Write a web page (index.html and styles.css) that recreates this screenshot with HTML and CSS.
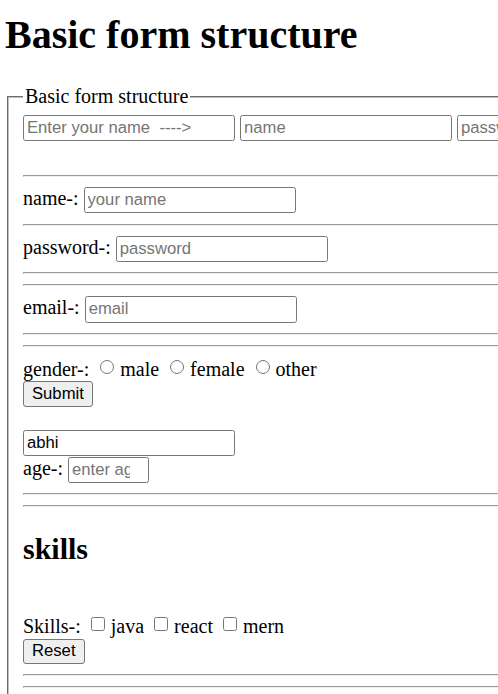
FILE: index.html
```html
<!DOCTYPE html>
<html lang="en">
<head>
<meta charset="utf-8">
<title>Basic form structure</title>
<link rel="stylesheet" href="styles.css">
</head>
<body>
<h1 class="title">Basic form structure</h1>
<form class="form">
<fieldset class="box">
<legend class="legend">Basic form structure</legend>
<div class="row"><input class="field" type="text" placeholder="Enter your name  ---->"> <input class="field" type="text" placeholder="name"> <input class="field" type="password" placeholder="password"> <input class="field" type="email" placeholder="email"></div>
<br>
<hr class="rule">
<label class="lbl">name-:</label> <input class="field" type="text" placeholder="your name">
<hr class="rule">
<label class="lbl">password-:</label> <input class="field" type="password" placeholder="password">
<hr class="rule">
<hr class="rule">
<label class="lbl">email-:</label> <input class="field" type="email" placeholder="email">
<hr class="rule">
<hr class="rule">
<label class="lbl">gender-:</label> <input class="radio" type="radio" name="gender">male <input class="radio" type="radio" name="gender">female <input class="radio" type="radio" name="gender">other<br>
<button class="btn" type="submit">Submit</button><br><br>
<input class="field" type="text" value="abhi"><br>
<label class="lbl">age-:</label> <input class="field age" type="number" placeholder="enter age">
<hr class="rule">
<hr class="rule">
<h2 class="sub">skills</h2>
<br>
<label class="lbl">Skills-:</label> <input class="check" type="checkbox">java <input class="check" type="checkbox">react <input class="check" type="checkbox">mern<br>
<button class="btn" type="reset">Reset</button>
<hr class="rule">
<hr class="rule">
</fieldset>
</form>
</body>
</html>
```
FILE: styles.css
```css
body {
  margin: 0 0 10px 5px;
  font-family: "Liberation Serif", "Times New Roman", serif;
  font-size: 20px;
  color: #000;
  background: #fff;
}

.title {
  font-size: 40px;
  font-weight: bold;
  margin: 11px 0 27px;
}

.form {
  margin: 0;
}

.box {
  margin: 0 2px;
  border: 2px groove #c0c0c0;
  padding: 7px 14px 12px;
  min-inline-size: min-content;
}

.legend {
  padding: 0 2px;
}

.row {
  white-space: nowrap;
}

.field {
  box-sizing: border-box;
  width: 212px;
  height: 26.25px;
  margin: 0 0 0.5px;
  padding: 1px 3px;
  font-family: "Liberation Sans", Arial, sans-serif;
  font-size: 16.67px;
  color: #000;
  border: 1px solid #767676;
  border-radius: 2.5px;
  background: #fff;
  white-space: pre;
}

.field::placeholder {
  color: #757575;
  white-space: pre;
}

.age {
  width: 81px;
}

.age::-webkit-inner-spin-button {
  opacity: 0;
  width: 24px;
}

.rule {
  margin: 10px 0;
}

.radio {
  width: 14px;
  height: 14px;
  margin: 3px 6px 0 6px;
  vertical-align: 2px;
}

.check {
  width: 14px;
  height: 14px;
  margin: 3px 6px 0 5px;
  vertical-align: 2px;
}

.btn {
  box-sizing: border-box;
  height: 25.5px;
  padding: 1px 8px;
  font-family: "Liberation Sans", Arial, sans-serif;
  font-size: 16.67px;
  color: #000;
  background: #efefef;
  border: 1px solid #767676;
  border-radius: 3px;
}

.sub {
  font-size: 30px;
  font-weight: bold;
  margin: 25px 0;
}
```
